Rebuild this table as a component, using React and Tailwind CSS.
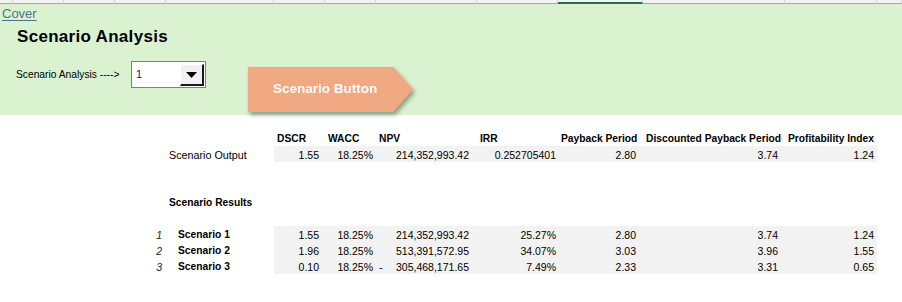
const GRID =
  "grid grid-cols-[13px_51px_51px_51px_108px_51px_51px_101px_81px_85px_142px_92px_1fr]";

const PR = ["pr-[6px]", "pr-[3px]", "pr-[8px]", "pr-[2px]", "pr-[7px]", "pr-[7px]", "pr-[3px]"];

function ValueRow({ num, label, labelBold, values, negNpv }) {
  return (
    <div className="grid grid-cols-[13px_51px_51px_51px_108px_51px_51px_101px_81px_85px_142px_92px_1fr] h-[16px]">
      <div />
      <div />
      <div />
      <div className="pt-[2px] leading-[14px] text-[10.5px] italic text-right pr-[4px] text-[#222]">
        {num}
      </div>
      <div
        className={
          labelBold
            ? "pt-[2px] leading-[14px] text-[10.25px] font-bold pl-[12px] whitespace-nowrap"
            : "pt-[2px] leading-[14px] text-[10.75px] pl-[3px] whitespace-nowrap"
        }
      >
        {label}
      </div>
      {values.map((v, i) => (
        <div
          key={i}
          className={`bg-[#f2f2f2] pt-[2px] leading-[14px] text-[10.5px] whitespace-nowrap flex ${PR[i]} ${
            i === 2 && negNpv ? "justify-between pl-[3px]" : "justify-end"
          }`}
        >
          {i === 2 && negNpv ? <span>-</span> : null}
          <span>{v}</span>
        </div>
      ))}
      <div />
    </div>
  );
}

function Header() {
  const heads = [
    "DSCR",
    "WACC",
    "NPV",
    "IRR",
    "Payback Period",
    "Discounted Payback Period",
    "Profitability Index",
  ];
  return (
    <div className="grid grid-cols-[13px_51px_51px_51px_108px_51px_51px_101px_81px_85px_142px_92px_1fr] h-[16px]">
      <div />
      <div />
      <div />
      <div />
      <div />
      {heads.map((h) => (
        <div
          key={h}
          className="pt-[2px] leading-[14px] text-[10.25px] font-bold pl-[3px] whitespace-nowrap"
        >
          {h}
        </div>
      ))}
      <div />
    </div>
  );
}

export default function App() {
  const stripCols = Array.from({ length: 13 });
  return (
    <div className="w-[902px] h-[302px] overflow-hidden bg-white text-black font-['Liberation_Sans',Arial,sans-serif]">
      {/* column header strip */}
      <div className={GRID}>
        {stripCols.map((_, i) => (
          <div
            key={i}
            className={
              i === 9
                ? "h-[4px] bg-[#f3f3f3] border-r border-r-[#d4d4d4] border-b-2 border-b-[#217346]"
                : "h-[4px] bg-[#f3f3f3] border-r border-r-[#d4d4d4] border-b border-b-[#a6a6a6]"
            }
          />
        ))}
      </div>

      {/* green band */}
      <div className="h-[111px] bg-[#daf2d0]">
        <div className="h-[18px] pt-[2px] pl-[2px] text-[13px] leading-[16px]">
          <span className="text-[#467886] underline underline-offset-[2px]">Cover</span>
        </div>
        <div className="mt-[5px] pl-[17px] text-[17px] tracking-[0.3px] font-bold leading-[20px] text-black">
          Scenario Analysis
        </div>
        <div className="flex items-start mt-[14px]">
          <div className="w-[131px] h-[27px] pl-[16px] flex items-center text-[10.25px] whitespace-nowrap">
            Scenario Analysis ----&gt;
          </div>
          <div className="w-[75px] h-[27px] bg-white border border-[#7f7f7f] flex items-stretch">
            <div className="flex-1 flex items-center pl-[4px] text-[11px] text-[#3d1450]">1</div>
            <div className="w-[24px] mt-[2px] mb-[1px] mr-[1px] bg-[#f0f0f0] border-t border-l border-t-white border-l-white border-r-2 border-b-2 border-r-[#1a1a1a] border-b-[#1a1a1a] flex items-center justify-center">
              <svg width="11" height="6" viewBox="0 0 11 6">
                <polygon points="0,0 11,0 5.5,6" fill="#000" />
              </svg>
            </div>
          </div>
          <div className="ml-[42px] mt-[6px] [filter:drop-shadow(2px_3px_2px_rgba(0,0,0,0.35))]">
            <div className="w-[165px] h-[45px] bg-[#f1a983] [clip-path:polygon(0_0,88%_0,100%_50%,88%_100%,0_100%)] flex items-center pl-[25px] text-white font-bold text-[13.5px] whitespace-nowrap">
              Scenario Button
            </div>
          </div>
        </div>
      </div>

      {/* table */}
      <div className="pt-[15px]">
        <Header />
        <ValueRow
          label="Scenario Output"
          values={["1.55", "18.25%", "214,352,993.42", "0.252705401", "2.80", "3.74", "1.24"]}
        />
        <div className="h-[16px]" />
        <div className="h-[16px]" />
        <div className="grid grid-cols-[13px_51px_51px_51px_108px_51px_51px_101px_81px_85px_142px_92px_1fr] h-[16px]">
          <div />
          <div />
          <div />
          <div />
          <div className="pt-[2px] leading-[14px] text-[10.25px] font-bold pl-[3px] whitespace-nowrap">
            Scenario Results
          </div>
        </div>
        <div className="h-[16px]" />
        <ValueRow
          num="1"
          label="Scenario 1"
          labelBold
          values={["1.55", "18.25%", "214,352,993.42", "25.27%", "2.80", "3.74", "1.24"]}
        />
        <ValueRow
          num="2"
          label="Scenario 2"
          labelBold
          values={["1.96", "18.25%", "513,391,572.95", "34.07%", "3.03", "3.96", "1.55"]}
        />
        <ValueRow
          num="3"
          label="Scenario 3"
          labelBold
          negNpv
          values={["0.10", "18.25%", "305,468,171.65", "7.49%", "2.33", "3.31", "0.65"]}
        />
      </div>
    </div>
  );
}
